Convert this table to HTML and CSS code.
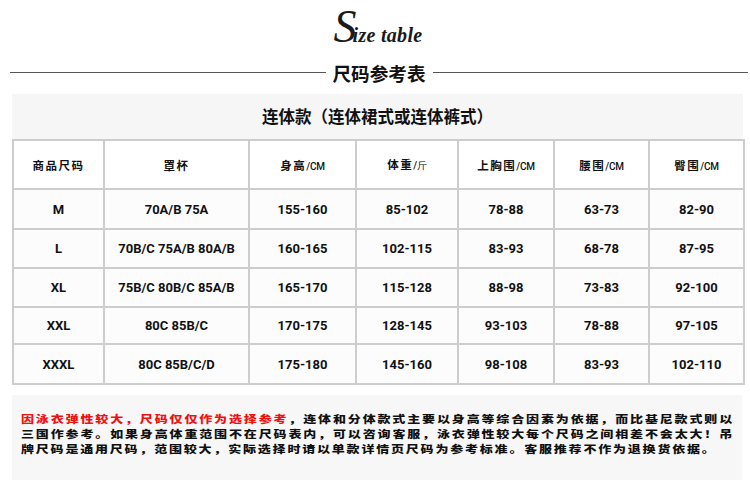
FILE: index.html
```html
<!DOCTYPE html>
<html lang="zh">
<head>
<meta charset="utf-8">
<link rel="stylesheet" href="styles.css">
</head>
<body>
<div class="script"><span class="cap">S</span><span class="rest">ize table</span></div>
<div class="heading"><span class="rule"></span><span class="htext">尺码参考表</span><span class="rule"></span></div>
<div class="panel">
  <div class="ptitle">连体款（连体裙式或连体裤式）</div>
  <table class="sizes">
    <colgroup>
      <col class="c1"><col class="c2"><col class="c3"><col class="c4"><col class="c5"><col class="c6"><col class="c7">
    </colgroup>
    <tr class="head">
      <th>商品尺码</th>
      <th>罩杯</th>
      <th>身高<small>/CM</small></th>
      <th>体重<small>/斤</small></th>
      <th>上胸围<small>/CM</small></th>
      <th>腰围<small>/CM</small></th>
      <th>臀围<small>/CM</small></th>
    </tr>
    <tr class="r1"><td>M</td><td>70A/B 75A</td><td>155-160</td><td>85-102</td><td>78-88</td><td>63-73</td><td>82-90</td></tr>
    <tr class="r2"><td>L</td><td>70B/C 75A/B 80A/B</td><td>160-165</td><td>102-115</td><td>83-93</td><td>68-78</td><td>87-95</td></tr>
    <tr class="r3"><td>XL</td><td>75B/C 80B/C 85A/B</td><td>165-170</td><td>115-128</td><td>88-98</td><td>73-83</td><td>92-100</td></tr>
    <tr class="r4"><td>XXL</td><td>80C 85B/C</td><td>170-175</td><td>128-145</td><td>93-103</td><td>78-88</td><td>97-105</td></tr>
    <tr class="r5"><td>XXXL</td><td>80C 85B/C/D</td><td>175-180</td><td>145-160</td><td>98-108</td><td>83-93</td><td>102-110</td></tr>
  </table>
</div>
<div class="notes">
  <div class="ntext">
    <div class="line just"><span class="red">因泳衣弹性较大，尺码仅仅作为选择参考</span>，连体和分体款式主要以身高等综合因素为依据，而比基尼款式则以</div>
    <div class="line just">三国作参考。如果身高体重范围不在尺码表内，可以咨询客服，泳衣弹性较大每个尺码之间相差不会太大！吊</div>
    <div class="line">牌尺码是通用尺码，范围较大，实际选择时请以单款详情页尺码为参考标准。客服推荐不作为退换货依据。</div>
  </div>
</div>
</body>
</html>
```

FILE: styles.css
```css
html, body {
  margin: 0;
  padding: 0;
  background: #ffffff;
}
body {
  width: 750px;
  height: 485px;
  overflow: hidden;
  font-family: "Noto Sans CJK SC", sans-serif;
  color: #111;
}

.script {
  height: 58px;
  box-sizing: border-box;
  padding-top: 4px;
  text-align: center;
  font-family: "Liberation Serif", serif;
  font-style: italic;
  color: #1a1a1a;
  line-height: 46px;
  padding-left: 6px;
}
.script .cap {
  font-size: 46px;
  letter-spacing: -4px;
}
.script .rest {
  font-size: 20px;
  font-weight: 700;
  letter-spacing: 0.3px;
}

.heading {
  height: 30px;
  display: flex;
  align-items: center;
  gap: 7px;
  padding: 0 2px 0 10px;
}
.heading .rule {
  flex: 1;
  height: 1px;
  background: #555;
  margin-top: -2px;
}
.heading .htext {
  font-size: 18.6px;
  font-weight: 700;
  line-height: 30px;
  color: #111;
}

.panel {
  margin: 6px 0 0 12px;
  width: 731px;
  background: #f6f6f6;
}
.ptitle {
  height: 45px;
  line-height: 45px;
  text-align: center;
  font-size: 16.5px;
  font-weight: 700;
  color: #111;
}

.sizes {
  width: 731px;
  border-collapse: collapse;
  table-layout: fixed;
  background: #fff;
}
.sizes .c1 { width: 91px; }
.sizes .c2 { width: 145px; }
.sizes .c3 { width: 107px; }
.sizes .c4 { width: 102px; }
.sizes .c5 { width: 96px; }
.sizes .c6 { width: 95px; }
.sizes .c7 { width: 95px; }

.sizes th, .sizes td {
  border: 2px solid #cdcdcd;
  padding: 0;
  text-align: center;
  vertical-align: middle;
}
.sizes th {
  font-size: 11.5px;
  font-weight: 700;
  letter-spacing: 1.5px;
  color: #111;
}
.sizes th small {
  font-family: "Roboto", sans-serif;
  font-size: 10px;
  font-weight: 500;
  letter-spacing: -0.3px;
}
.sizes td {
  font-family: "Roboto", "Noto Sans CJK SC", sans-serif;
  font-size: 13px;
  font-weight: 700;
  color: #111;
  background: #fcfcfc;
}
.sizes tr.head { height: 49px; }
.sizes tr.r1 { height: 40px; }
.sizes tr.r2 { height: 39px; }
.sizes tr.r3 { height: 39px; }
.sizes tr.r4 { height: 37px; }
.sizes tr.r5 { height: 40px; }

.notes {
  margin: 10px 0 0 12px;
  width: 730px;
  height: 85px;
  box-sizing: border-box;
  padding: 16px 8px 0 9px;
  background: #f7f7f7;
}
.notes .ntext {
  transform: scaleY(0.79);
  transform-origin: top left;
}
.notes .line {
  font-size: 13px;
  font-weight: 900;
  letter-spacing: 1.8px;
  line-height: 19px;
  white-space: nowrap;
  color: #111;
}
.notes .line.just {
  text-align: justify;
  text-align-last: justify;
  white-space: normal;
}
.notes .red {
  color: #f01010;
}
```
